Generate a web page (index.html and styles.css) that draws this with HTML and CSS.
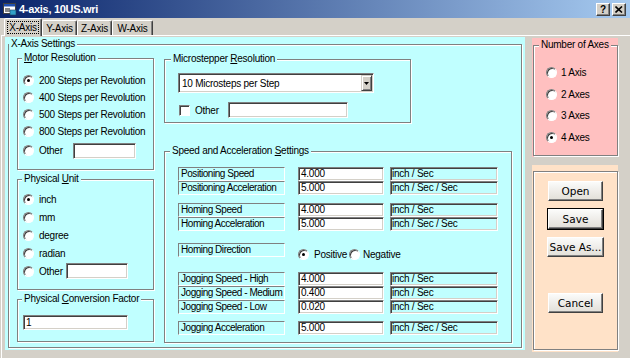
FILE: index.html
```html
<!DOCTYPE html>
<html lang="en">

<head>
    <meta charset="utf-8">
    <title>4-axis, 10US.wri</title>
    <link rel="stylesheet" href="styles.css">
</head>

<body>
    <div class="window">
        <div class="titlebar">
            <svg class="app-icon" viewBox="0 0 14 14" width="14" height="14">
                <rect x="0.5" y="1.5" width="12" height="10" fill="#fff" stroke="#404040" />
                <rect x="1" y="2" width="11" height="2.5" fill="#2050b0" />
                <rect x="2" y="6" width="5" height="4" fill="#8a8a8a" />
                <rect x="7" y="8" width="6" height="5" fill="#30a0c8" stroke="#204060" stroke-width="0.6" />
            </svg>
            <span class="title">4-axis, 10US.wri</span>
            <span class="caption-btn help">?</span>
            <span class="caption-btn close">
                <svg viewBox="0 0 8 7" width="8" height="7">
                    <path d="M0.5 0.5 L7 6.5 M7 0.5 L0.5 6.5" stroke="#000" stroke-width="1.6" />
                </svg>
            </span>
        </div>

        <div class="tabstrip">
            <div class="tab active"><span class="focus">X-Axis</span></div>
            <div class="tab tab-y">Y-Axis</div>
            <div class="tab tab-z">Z-Axis</div>
            <div class="tab tab-w">W-Axis</div>
        </div>

        <div class="tabpage">
            <div class="axis-panel">
                <fieldset class="group axis-group">
                    <legend>X-Axis Settings</legend>
                    <div class="axis-body">
                        <div class="col-left">
                            <fieldset class="group motor">
                                <legend><u>M</u>otor Resolution</legend>
                                <div class="motor-list">
                                    <div class="opt"><span class="radio checked"></span>200 Steps per Revolution</div>
                                    <div class="opt"><span class="radio"></span>400 Steps per Revolution</div>
                                    <div class="opt"><span class="radio"></span>500 Steps per Revolution</div>
                                    <div class="opt"><span class="radio"></span>800 Steps per Revolution</div>
                                    <div class="opt opt-other"><span class="radio"></span><span class="other-motor">Other</span><span class="edit edit-motor"></span></div>
                                </div>
                            </fieldset>
                            <fieldset class="group unit">
                                <legend>Physical <u>U</u>nit</legend>
                                <div class="unit-list">
                                    <div class="opt"><span class="radio checked"></span>inch</div>
                                    <div class="opt"><span class="radio"></span>mm</div>
                                    <div class="opt"><span class="radio"></span>degree</div>
                                    <div class="opt"><span class="radio"></span>radian</div>
                                    <div class="opt"><span class="radio"></span><span class="other-unit">Other</span><span class="edit edit-unit"></span></div>
                                </div>
                            </fieldset>
                            <fieldset class="group factor">
                                <legend>Physical <u>C</u>onversion Factor</legend>
                                <div class="factor-body">
                                    <span class="edit edit-factor">1</span>
                                </div>
                            </fieldset>
                        </div>

                        <div class="col-right">
                            <fieldset class="group micro">
                                <legend>Microstepper <u>R</u>esolution</legend>
                                <div class="micro-body">
                                    <div class="combo">
                                        <span class="combo-text">10 Microsteps per Step</span>
                                        <span class="combo-btn">
                                            <svg viewBox="0 0 5 3" width="5" height="3">
                                                <path d="M0 0 H5 L2.5 3 Z" fill="#000" />
                                            </svg>
                                        </span>
                                    </div>
                                    <div class="check-row">
                                        <span class="check"></span>
                                        <span class="other-micro">Other</span>
                                        <span class="edit edit-micro"></span>
                                    </div>
                                </div>
                            </fieldset>

                            <fieldset class="group speed">
                                <legend>Speed and Acceleration <u>S</u>ettings</legend>
                                <div class="speed-body">
                                    <div class="sgroup">
                                        <div class="srow"><span class="lbl">Positioning Speed</span><span class="val">4.000</span><span class="unit-box">inch / Sec</span></div>
                                        <div class="srow"><span class="lbl">Positioning Acceleration</span><span class="val">5.000</span><span class="unit-box">inch / Sec / Sec</span></div>
                                    </div>
                                    <div class="sgroup homing">
                                        <div class="srow"><span class="lbl">Homing Speed</span><span class="val">4.000</span><span class="unit-box">inch / Sec</span></div>
                                        <div class="srow"><span class="lbl">Homing Acceleration</span><span class="val">5.000</span><span class="unit-box">inch / Sec / Sec</span></div>
                                    </div>
                                    <div class="sgroup direction">
                                        <div class="srow">
                                            <span class="lbl">Homing Direction</span>
                                            <span class="dir-opts">
                                                <span class="radio checked"></span>Positive<span class="radio neg"></span>Negative
                                            </span>
                                        </div>
                                    </div>
                                    <div class="sgroup jogging">
                                        <div class="srow"><span class="lbl">Jogging Speed - High</span><span class="val">4.000</span><span class="unit-box">inch / Sec</span></div>
                                        <div class="srow"><span class="lbl">Jogging Speed - Medium</span><span class="val">0.400</span><span class="unit-box">inch / Sec</span></div>
                                        <div class="srow"><span class="lbl">Jogging Speed - Low</span><span class="val">0.020</span><span class="unit-box">inch / Sec</span></div>
                                    </div>
                                    <div class="sgroup jog-accel">
                                        <div class="srow"><span class="lbl">Jogging Acceleration</span><span class="val">5.000</span><span class="unit-box">inch / Sec / Sec</span></div>
                                    </div>
                                </div>
                            </fieldset>
                        </div>
                    </div>
                </fieldset>
            </div>

            <div class="side">
                <div class="axes-panel">
                    <fieldset class="group axes">
                        <legend>Number of Axes</legend>
                        <div class="axes-list">
                            <div class="opt"><span class="radio"></span>1 Axis</div>
                            <div class="opt"><span class="radio"></span>2 Axes</div>
                            <div class="opt"><span class="radio"></span>3 Axes</div>
                            <div class="opt"><span class="radio checked"></span>4 Axes</div>
                        </div>
                    </fieldset>
                </div>
                <div class="file-panel">
                    <div class="group file-group">
                        <button class="btn">Open</button>
                        <button class="btn default">Save</button>
                        <button class="btn wide">Save As...</button>
                        <button class="btn cancel">Cancel</button>
                    </div>
                </div>
            </div>
        </div>
    </div>
</body>

</html>
```

FILE: styles.css
```css
:root {
    --face: #d4d0c8;
    --shadow: #808080;
    --dark: #404040;
    --cyan: #c0ffff;
    --pink: #ffc0c0;
    --peach: #ffe2c8;
}

* {
    box-sizing: border-box;
}

body {
    margin: 0;
    background: var(--face);
    font-family: 'Liberation Sans', Arial, sans-serif;
    font-size: 10px;
    letter-spacing: -0.25px;
    color: #000;
}

.window {
    width: 630px;
    height: 358px;
    overflow: hidden;
}

/* title bar */
.titlebar {
    height: 18px;
    display: flex;
    align-items: center;
    padding: 0 4px 0 3px;
    background: linear-gradient(to right, #0a246a, #a6caf0);
}

.app-icon {
    flex: none;
}

.title {
    flex: 1;
    margin-left: 2px;
    color: #fff;
    font-weight: bold;
    font-size: 11px;
    letter-spacing: -0.3px;
}

.caption-btn {
    width: 14px;
    height: 13px;
    display: flex;
    align-items: center;
    justify-content: center;
    background: var(--face);
    border: 1px solid;
    border-color: #fff var(--dark) var(--dark) #fff;
    box-shadow: inset -1px -1px var(--shadow);
    font-weight: bold;
    font-size: 10px;
    letter-spacing: 0;
}

.close {
    margin-left: 2px;
}

/* tabs */
.tabstrip {
    height: 17px;
    display: flex;
    align-items: flex-end;
    padding-left: 4px;
}

.tab {
    height: 15px;
    display: flex;
    align-items: center;
    justify-content: center;
    border: 1px solid;
    border-bottom: 0;
    border-color: #fff var(--dark) transparent #fff;
    border-radius: 2px 2px 0 0;
    box-shadow: inset -1px 0 var(--shadow);
}

.tab.active {
    width: 38px;
    height: 18px;
    margin-bottom: -1px;
    position: relative;
    z-index: 1;
    background: var(--face);
}

.tab-y {
    width: 35px;
}

.tab-z {
    width: 35px;
}

.tab-w {
    width: 41px;
}

.focus {
    outline: 1px dotted #000;
    padding: 0 1px;
    line-height: 11px;
}

.tabpage {
    height: 323px;
    margin-left: 1px;
    display: flex;
    gap: 7px;
    padding: 1px 0 0 3px;
    border-top: 1px solid #fff;
    border-left: 1px solid #fff;
}

/* group boxes */
.group {
    margin: 0;
    padding: 0;
    min-width: 0;
    border: 1px solid var(--shadow);
    box-shadow: inset 1px 1px #fff, 1px 1px #fff;
}

.group legend {
    padding: 0 2px;
    line-height: 12px;
    font-size: 10px;
    background: var(--cyan);
}

.axis-panel {
    width: 520px;
    height: 313px;
    padding: 1px 3px 0 3px;
    background: var(--cyan);
}

.axis-group {
    width: 514px;
    height: 310px;
}

.axis-body {
    display: flex;
    gap: 10px;
    padding: 2px 0 0 8px;
}

.col-left {
    width: 137px;
    display: flex;
    flex-direction: column;
    gap: 3px;
}

.col-left legend {
    margin-left: 4px;
}

.motor {
    height: 118px;
}

.unit {
    height: 117px;
}

.factor {
    height: 49px;
}

.opt {
    display: flex;
    align-items: center;
    white-space: nowrap;
}

.motor-list {
    padding: 8px 0 0 5px;
}

.motor-list .opt {
    height: 17px;
}

.motor-list .opt-other {
    margin-top: 2px;
}

.unit-list {
    padding: 5px 0 0 5px;
}

.unit-list .opt {
    height: 18px;
}

.radio {
    flex: none;
    width: 11px;
    height: 11px;
    margin-right: 5px;
    display: flex;
    align-items: center;
    justify-content: center;
    border-radius: 50%;
    background: #fff;
    border: 1px solid;
    border-color: var(--shadow) #fff #fff var(--shadow);
    box-shadow: inset 1px 1px var(--dark);
}

.radio.checked::after {
    content: "";
    width: 3px;
    height: 3px;
    border-radius: 50%;
    background: #000;
}

.edit {
    display: block;
    height: 16px;
    padding-left: 2px;
    line-height: 12px;
    background: #fff;
    border: 1px solid;
    border-color: var(--shadow) #fff #fff var(--shadow);
    box-shadow: inset 1px 1px var(--dark), inset -1px -1px var(--face);
}

.other-motor {
    width: 34px;
}

.edit-motor {
    width: 63px;
}

.other-unit {
    width: 27px;
}

.edit-unit {
    width: 62px;
}

.factor-body {
    padding: 10px 0 0 5px;
}

.edit-factor {
    width: 105px;
    height: 15px;
    padding-top: 1px;
}

/* right column */
.col-right {
    width: 348px;
    margin-top: 1px;
    display: flex;
    flex-direction: column;
    gap: 22px;
}

.micro {
    width: 247px;
    height: 70px;
}

.micro legend {
    margin-left: 6px;
}

.micro-body {
    padding: 8px 0 0 13px;
}

.combo {
    width: 196px;
    height: 20px;
    display: flex;
    align-items: center;
    justify-content: space-between;
    padding-left: 1px;
    background: #fff;
    border: 1px solid;
    border-color: var(--shadow) #fff #fff var(--shadow);
    box-shadow: inset 1px 1px var(--dark), inset -1px -1px var(--face);
}

.combo-text {
    padding-left: 2px;
}

.combo-btn {
    width: 11px;
    height: 16px;
    margin-right: 1px;
    display: flex;
    align-items: center;
    justify-content: center;
    background: var(--face);
    border: 1px solid;
    border-color: var(--face) var(--dark) var(--dark) var(--face);
    box-shadow: inset 1px 1px #fff, inset -1px -1px var(--shadow);
}

.check-row {
    height: 16px;
    margin-top: 9px;
    display: flex;
    align-items: center;
}

.check {
    width: 11px;
    height: 11px;
    margin: 0 5px 0 1px;
    background: #fff;
    border: 1px solid;
    border-color: var(--shadow) #fff #fff var(--shadow);
    box-shadow: inset 1px 1px var(--dark);
}

.other-micro {
    width: 33px;
}

.edit-micro {
    width: 120px;
}

.speed {
    width: 348px;
    height: 198px;
}

.speed legend {
    margin-left: 5px;
}

.speed-body {
    padding: 10px 0 0 13px;
}

.homing {
    margin-top: 8px;
}

.direction {
    margin-top: 12px;
}

.jogging {
    margin-top: 15px;
}

.jog-accel {
    margin-top: 7px;
}

.srow {
    height: 14px;
    display: flex;
    align-items: flex-start;
    white-space: nowrap;
}

.lbl {
    width: 107px;
    height: 14px;
    padding-left: 2px;
    line-height: 12px;
    letter-spacing: -0.45px;
    overflow: hidden;
    background: var(--cyan);
    border: 1px solid;
    border-color: var(--shadow) #fff #fff var(--shadow);
}

.val,
.unit-box {
    height: 14px;
    line-height: 11px;
    border: 1px solid;
    border-color: var(--shadow) #fff #fff var(--shadow);
    box-shadow: inset 1px 1px var(--dark), inset -1px -1px var(--face);
}

.val {
    width: 86px;
    margin-left: 13px;
    padding-left: 2px;
    background: #fff;
}

.unit-box {
    width: 108px;
    margin-left: 6px;
    padding-left: 1px;
    background: var(--cyan);
}

.dir-opts {
    height: 14px;
    margin: 4px 0 0 13px;
    display: flex;
    align-items: center;
}

.radio.neg {
    margin-left: 2px;
    margin-right: 3px;
}

/* side panels */
.side {
    width: 86px;
    margin-top: 1px;
    display: flex;
    flex-direction: column;
    gap: 8px;
}

.axes-panel {
    height: 119px;
    padding: 1px 0 0 1px;
    background: var(--pink);
}

.axes {
    width: 85px;
    height: 117px;
}

.axes legend {
    margin-left: 5px;
    background: var(--pink);
}

.axes-list {
    padding: 11px 0 0 12px;
}

.axes-list .opt {
    height: 21.5px;
}

.axes-list .radio {
    margin-right: 4px;
}

.file-panel {
    height: 187px;
    padding: 6px 0 0 1px;
    background: var(--peach);
}

.file-group {
    width: 85px;
    height: 179px;
    display: flex;
    flex-direction: column;
    align-items: center;
    gap: 8px;
    padding-top: 9px;
}

.btn {
    width: 55px;
    height: 20px;
    padding: 0;
    font-family: 'DejaVu Sans', Verdana, sans-serif;
    font-size: 10.5px;
    letter-spacing: 0;
    color: #000;
    background: linear-gradient(#fbfbfa, #e2dfd8);
    border: 1px solid;
    border-color: #fff var(--dark) var(--dark) #fff;
    box-shadow: inset -1px -1px var(--shadow);
}

.btn.default {
    outline: 1px solid #000;
}

.btn.wide {
    width: 57px;
}

.btn.cancel {
    margin-top: 28px;
}
```
